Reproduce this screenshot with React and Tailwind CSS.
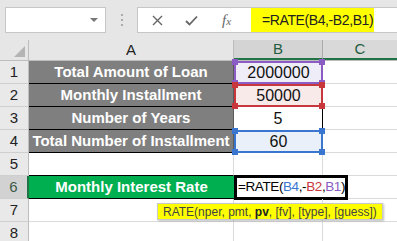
import React from 'react';

function Handle({ className }) {
  return <div className={`absolute z-10 w-[6px] h-[6px] ${className}`}></div>;
}

function RowHead({ n, active }) {
  return (
    <div
      className={`w-[29px] shrink-0 flex items-center justify-center text-[15px] border-b border-[#cfcfcf] ${
        active ? 'bg-[#d2d2d2] border-r-2 border-r-[#217346] text-[#3d5a4a]' : 'bg-[#e9e9e9] border-r border-r-[#bdbdbd] text-[#222]'
      }`}
    >
      {n}
    </div>
  );
}

const labels = [
  'Total Amount of Loan',
  'Monthly Installment',
  'Number of Years',
  'Total Number of Installment',
];

export default function App() {
  return (
    <div className="w-[397px] h-[241px] bg-white overflow-hidden relative font-['Liberation_Sans',Arial,sans-serif]">
      {/* formula bar */}
      <div className="h-[40px] bg-[#e6e6e6] flex items-start pt-[7px]">
        <div className="ml-[5px] w-[101px] h-[26px] bg-white border border-[#c6c6c6] relative">
          <div className="absolute right-[7px] top-[10px] w-0 h-0 border-l-[4px] border-r-[4px] border-t-[4px] border-l-transparent border-r-transparent border-t-[#777]"></div>
        </div>
        <div className="w-[31px] h-[26px] flex flex-col items-center justify-center gap-[3px]">
          <span className="w-[2px] h-[2px] bg-[#aaa]"></span>
          <span className="w-[2px] h-[2px] bg-[#aaa]"></span>
          <span className="w-[2px] h-[2px] bg-[#aaa]"></span>
        </div>
        <div className="flex-1 h-[26px] bg-white border border-[#c6c6c6] border-r-0 flex items-stretch">
          <div className="w-[113px] flex items-center">
            <svg className="ml-[14px]" width="11" height="11" viewBox="0 0 11 11">
              <path d="M1 1 L10 10 M10 1 L1 10" stroke="#666" strokeWidth="1.4" />
            </svg>
            <svg className="ml-[22px]" width="13" height="11" viewBox="0 0 13 11">
              <path d="M1 6 L4.5 9.5 L12 1.5" stroke="#666" strokeWidth="1.8" fill="none" />
            </svg>
            <span className="ml-[24px] font-['Liberation_Serif',serif] italic text-[15px] text-[#666] leading-none">
              f<span className="text-[11px]">x</span>
            </span>
          </div>
          <div className="w-[123px] bg-[#ffff00] flex items-center pl-[11px] text-[14px] tracking-[-0.4px] text-[#222]">
            =RATE(B4,-B2,B1)
          </div>
        </div>
      </div>

      {/* column headers */}
      <div className="h-[21px] flex border-b border-[#bdbdbd]">
        <div className="w-[29px] shrink-0 bg-[#e6e6e6] border-r border-[#bdbdbd] flex items-end justify-end pr-[3px] pb-[3px]">
          <svg width="11" height="11" viewBox="0 0 11 11">
            <path d="M11 0 L11 11 L0 11 Z" fill="#b4b4b4" />
          </svg>
        </div>
        <div className="w-[205px] shrink-0 bg-[#e6e6e6] border-r border-[#bdbdbd] flex items-center justify-center text-[15px] text-[#222]">
          A
        </div>
        <div className="w-[89px] shrink-0 bg-[#d4d4d4] border-r border-[#ababab] border-b-2 border-b-[#217346] flex items-center justify-center text-[15px] text-[#1f5c40]">
          B
        </div>
        <div className="flex-1 bg-[#d9d9d9] border-b-2 border-b-[#217346] flex items-center justify-center text-[15px] text-[#1f5c40]">
          C
        </div>
      </div>

      {/* rows 1-4 */}
      {labels.map((label, i) => {
        const values = ['2000000', '50000', '5', '60'];
        const styles = [
          { box: 'bg-[#efedf8] border-2 border-[#8a5cc4]', handle: 'bg-[#8a5cc4]' },
          { box: 'bg-[#f9eaea] border-2 border-[#c8373c]', handle: 'bg-[#c8373c]' },
          { box: 'bg-white border-r border-r-black', handle: '' },
          { box: 'bg-[#e9f0fa] border-2 border-[#3a76cf]', handle: 'bg-[#3a76cf]' },
        ];
        const s = styles[i];
        return (
          <div key={i} className="h-[23px] flex">
            <RowHead n={i + 1} />
            <div className="w-[205px] shrink-0 bg-[#7f7f7f] border-b border-black border-r border-r-[#5a5a5a] flex items-center justify-center overflow-visible whitespace-nowrap text-white font-bold text-[15px]">
              {label}
            </div>
            <div className={`w-[89px] shrink-0 relative flex items-center justify-center text-[16px] text-[#111] ${s.box}`}>
              {values[i]}
              {s.handle && (
                <>
                  <Handle className={`-left-[4px] -top-[4px] ${s.handle}`} />
                  <Handle className={`-right-[4px] -top-[4px] ${s.handle}`} />
                  <Handle className={`-left-[4px] -bottom-[4px] ${s.handle}`} />
                  <Handle className={`-right-[4px] -bottom-[4px] ${s.handle}`} />
                </>
              )}
            </div>
            <div className="flex-1 border-b border-[#dadada]"></div>
          </div>
        );
      })}

      {/* row 5 */}
      <div className="h-[23px] flex">
        <RowHead n={5} />
        <div className="w-[205px] shrink-0 border-b border-black border-r border-r-[#dadada]"></div>
        <div className="w-[89px] shrink-0 border-b border-[#dadada] border-r border-r-[#dadada]"></div>
        <div className="flex-1 border-b border-[#dadada]"></div>
      </div>

      {/* row 6 */}
      <div className="h-[23px] flex">
        <RowHead n={6} active />
        <div className="w-[205px] shrink-0 bg-[#00b050] border-b border-black flex items-center justify-center text-white font-bold text-[15px] whitespace-nowrap">
          Monthly Interest Rate
        </div>
        <div className="w-[114px] shrink-0 h-[25px] -mt-[1px] border-[3px] border-black bg-white flex items-center pl-[1px] text-[13.5px] tracking-[-0.4px] text-black whitespace-nowrap">
          =RATE(<span className="text-[#3a76cf]">B4</span>,-<span className="text-[#c8373c]">B2</span>,<span className="text-[#8a5cc4]">B1</span>)
        </div>
        <div className="flex-1 border-b border-[#dadada]"></div>
      </div>

      {/* rows 7-8 */}
      {[7, 8].map((n) => (
        <div key={n} className="h-[23px] flex">
          <RowHead n={n} />
          <div className="w-[205px] shrink-0 border-b border-[#dadada] border-r border-r-[#dadada]"></div>
          <div className="w-[89px] shrink-0 border-b border-[#dadada] border-r border-r-[#dadada]"></div>
          <div className="flex-1 border-b border-[#dadada]"></div>
        </div>
      ))}

      {/* function tooltip */}
      <div className="absolute left-[157px] top-[203px] h-[17px] px-[5px] bg-[#ffff00] border border-[#c8c8c8] shadow-[1px_1px_2px_rgba(0,0,0,0.25)] flex items-center text-[12px] text-[#444] whitespace-nowrap">
        RATE(nper, pmt,&nbsp;<span className="font-bold text-[#222]">pv</span>, [fv], [type], [guess])
      </div>
    </div>
  );
}
